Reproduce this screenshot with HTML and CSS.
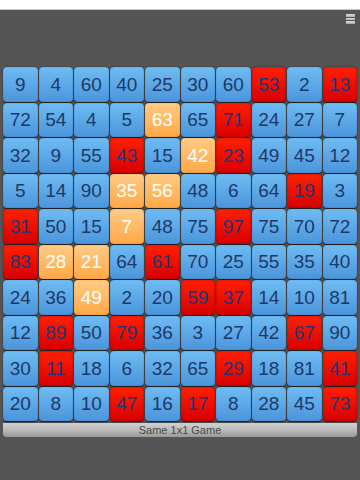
FILE: index.html
```html
<!DOCTYPE html>
<html>
<head>
<meta charset="utf-8">
<link rel="stylesheet" href="styles.css">
</head>
<body>
<div class="topbar"></div>
<div class="header">
  <div class="menu"><span></span><span></span><span></span></div>
</div>
<div class="board" id="board"></div>
<div class="footer">Same 1x1 Game</div>
<script src="app.js"></script>
</body>
</html>
```
FILE: styles.css
```css
html, body {
  margin: 0;
  padding: 0;
}
body {
  width: 360px;
  height: 480px;
  background: #555555;
  font-family: "Liberation Sans", Arial, sans-serif;
  overflow: hidden;
}
.topbar {
  height: 9px;
  background: #ffffff;
  border-bottom: 1px solid #c8c8c8;
}
.header {
  height: 57px;
  display: flex;
  justify-content: flex-end;
  align-items: flex-start;
  padding: 4px 5px 0 0;
  box-sizing: border-box;
}
.menu {
  width: 9px;
  display: flex;
  flex-direction: column;
  gap: 1px;
}
.menu span {
  display: block;
  height: 2.5px;
  background: linear-gradient(#e0e0e0, #a8a8a8);
  border-radius: 0.5px;
}
.board {
  margin: 0 3px;
  display: grid;
  grid-template-columns: repeat(10, 1fr);
  grid-auto-rows: 34.5px;
  gap: 1px;
}
.tile {
  border-radius: 4px;
  display: flex;
  align-items: center;
  justify-content: center;
  font-size: 19px;
  color: #1c3a68;
  background: linear-gradient(#6fbcf3, #4b94db);
  box-shadow: inset 0 0 1px rgba(0, 40, 100, 0.5), 0 0.5px 1.5px rgba(0, 0, 0, 0.7);
  padding-top: 1px;
  box-sizing: border-box;
}
.tile.o {
  background: linear-gradient(#ffcb85, #ffa846);
  color: #ffffff;
  box-shadow: inset 0 0 1px rgba(140, 70, 0, 0.5), 0 0.5px 1.5px rgba(0, 0, 0, 0.7);
}
.tile.r {
  background: linear-gradient(#ff2000, #d80000);
  color: #25357a;
  box-shadow: inset 0 0 2px rgba(120, 0, 0, 0.6), 0 0.5px 1.5px rgba(0, 0, 0, 0.7);
}
.footer {
  margin: 2px 3px 0 3px;
  height: 14px;
  line-height: 14px;
  text-align: center;
  font-size: 11px;
  color: #4a4a4a;
  background: linear-gradient(#d2d2d2, #b4b4b4 60%, #9a9a9a);
  border-radius: 0 0 4px 4px;
}
```
FILE: app.js
```js
var data = [
  "9 4 60 40 25 30 60 53r 2 13r",
  "72 54 4 5 63o 65 71r 24 27 7",
  "32 9 55 43r 15 42o 23r 49 45 12",
  "5 14 90 35o 56o 48 6 64 19r 3",
  "31r 50 15 7o 48 75 97r 75 70 72",
  "83r 28o 21o 64 61r 70 25 55 35 40",
  "24 36 49o 2 20 59r 37r 14 10 81",
  "12 89r 50 79r 36 3 27 42 67r 90",
  "30 11r 18 6 32 65 29r 18 81 41r",
  "20 8 10 47r 16 17r 8 28 45 73r"
];
var board = document.getElementById("board");
data.forEach(function (row) {
  row.split(" ").forEach(function (c) {
    var d = document.createElement("div");
    d.className = "tile";
    var last = c.charAt(c.length - 1);
    if (last === "r" || last === "o") {
      d.className += " " + last;
      c = c.slice(0, -1);
    }
    d.textContent = c;
    board.appendChild(d);
  });
});
```
